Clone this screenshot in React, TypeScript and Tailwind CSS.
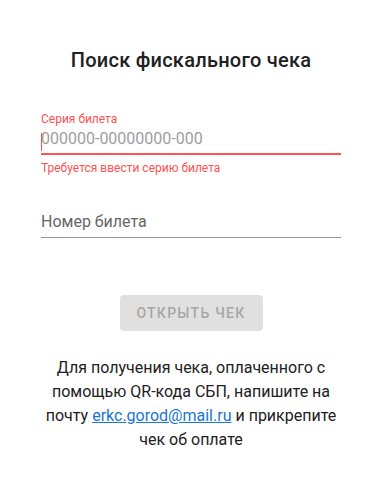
import { useState } from 'react';

export default function App() {
  const [series, setSeries] = useState('');
  const [number, setNumber] = useState('');

  return (
    <div className="min-h-screen bg-white font-['Roboto',sans-serif]">
      <div className="w-[382px] flex flex-col items-center">
        <h1 className="mt-[44px] text-[20px] leading-8 font-medium tracking-[0.25px] text-[#212121]">
          Поиск фискального чека
        </h1>

        <div className="w-[300px] mt-[35px]">
          <label className="block text-[12px] leading-4 text-[#ff5252]">Серия билета</label>
          <div className="relative">
            <input
              value={series}
              onChange={(e) => setSeries(e.target.value)}
              placeholder="000000-00000000-000"
              className="w-full h-[28px] pb-[3px] text-[16px] text-[#212121] placeholder:text-[#9e9e9e] outline-none border-b-2 border-[#ff5252] bg-transparent"
            />
            {series === '' && <span className="absolute left-0 top-[6px] w-px h-[18px] bg-[#ff5252]" />}
          </div>
          <div className="mt-[5px] text-[12px] leading-4 text-[#ff5252]">Требуется ввести серию билета</div>
        </div>

        <div className="w-[300px] mt-[33px]">
          <input
            value={number}
            onChange={(e) => setNumber(e.target.value)}
            placeholder="Номер билета"
            className="w-full h-[29px] pb-[4px] text-[16px] text-[#212121] placeholder:text-[#666666] outline-none border-b border-[#949494] bg-transparent"
          />
        </div>

        <button
          disabled
          className="mt-[57px] w-[143px] h-[36px] rounded bg-[#e0e0e0] text-[#a6a6a6] text-[14px] font-medium tracking-[1.25px] uppercase"
        >
          Открыть чек
        </button>

        <p className="mt-[25px] w-[300px] text-center text-[16px] leading-6 text-[#212121]">
          Для получения чека, оплаченного с помощью QR-кода СБП, напишите на почту{' '}
          <a href="mailto:erkc.gorod@mail.ru" className="text-[#1976d2] underline">
            erkc.gorod@mail.ru
          </a>{' '}
          и прикрепите чек об оплате
        </p>
      </div>
    </div>
  );
}
